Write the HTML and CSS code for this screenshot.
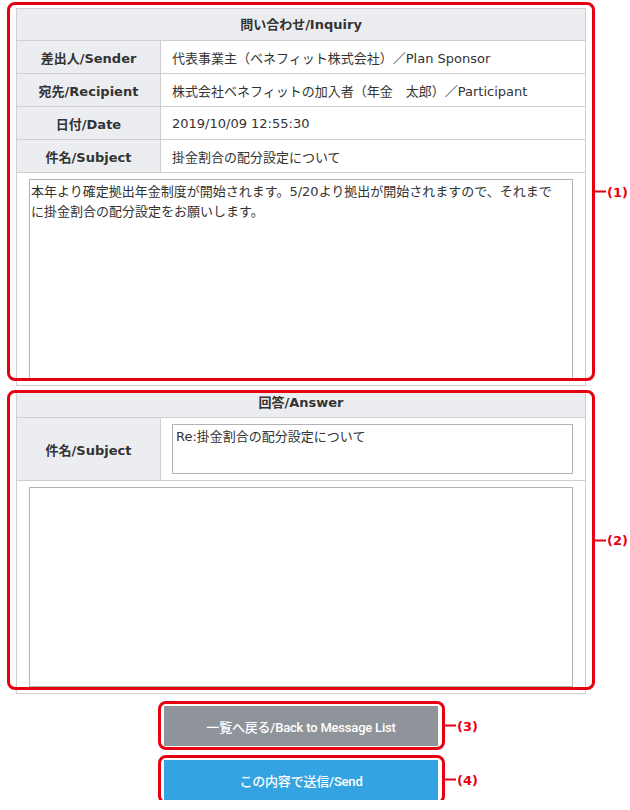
FILE: index.html
```html
<!DOCTYPE html>
<html lang="ja">
<head>
<meta charset="utf-8">
<title>問い合わせ/Inquiry</title>
<link rel="stylesheet" href="styles.css">
</head>
<body>
<div class="page">
  <section class="panel panel-inquiry">
    <div class="panel-head">問い合わせ/Inquiry</div>
    <div class="row">
      <div class="label">差出人/Sender</div>
      <div class="value">代表事業主（ベネフィット株式会社）／Plan Sponsor</div>
    </div>
    <div class="row">
      <div class="label">宛先/Recipient</div>
      <div class="value">株式会社ベネフィットの加入者（年金　太郎）／Participant</div>
    </div>
    <div class="row">
      <div class="label">日付/Date</div>
      <div class="value">2019/10/09 12:55:30</div>
    </div>
    <div class="row">
      <div class="label">件名/Subject</div>
      <div class="value">掛金割合の配分設定について</div>
    </div>
    <div class="body-cell">
      <textarea class="msg" readonly>本年より確定拠出年金制度が開始されます。5/20より拠出が開始されますので、それまでに掛金割合の配分設定をお願いします。</textarea>
    </div>
    <div class="anno anno-1"><span class="tag"><i class="wire"></i>(1)</span></div>
  </section>

  <section class="panel panel-answer">
    <div class="panel-head panel-head-sm">回答/Answer</div>
    <div class="row row-tall">
      <div class="label">件名/Subject</div>
      <div class="value value-input">
        <textarea class="subject">Re:掛金割合の配分設定について</textarea>
      </div>
    </div>
    <div class="body-cell">
      <textarea class="msg"></textarea>
    </div>
    <div class="anno anno-2"><span class="tag"><i class="wire"></i>(2)</span></div>
  </section>

  <div class="actions">
    <button class="btn btn-back" type="button">一覧へ戻る/Back to Message List<span class="anno anno-btn anno-3"><span class="tag"><i class="wire"></i>(3)</span></span></button>
    <button class="btn btn-send" type="button">この内容で送信/Send<span class="anno anno-btn anno-4"><span class="tag"><i class="wire"></i>(4)</span></span></button>
  </div>
</div>
</body>
</html>
```

FILE: styles.css
```css
* {
  box-sizing: border-box;
}

body {
  margin: 0;
  background: #ffffff;
  color: #333333;
  font-family: "DejaVu Sans", "Noto Sans CJK JP", sans-serif;
  font-size: 13px;
}

.page {
  width: 570px;
  margin-left: 16px;
  padding-top: 8px;
}

.panel {
  position: relative;
  border: 1px solid #cfcfcf;
}

.panel + .panel {
  margin-top: 6px;
}

.panel-head {
  height: 32px;
  line-height: 31px;
  background: #ecedf0;
  border-bottom: 1px solid #cfcfcf;
  font-weight: bold;
  text-align: center;
}

.panel-head-sm {
  height: 25px;
  line-height: 19px;
  padding-bottom: 5px;
}

.row {
  display: flex;
  height: 33px;
  border-bottom: 1px solid #cfcfcf;
}

.row-tall {
  height: 63px;
}

.label {
  flex: 0 0 144px;
  display: flex;
  align-items: center;
  justify-content: center;
  background: #ecedf0;
  border-right: 1px solid #cfcfcf;
  font-weight: bold;
  white-space: nowrap;
}

.value {
  flex: 1;
  display: flex;
  align-items: center;
  padding-left: 11px;
  white-space: nowrap;
}

.value-input {
  padding: 6px 12px 6px 11px;
}

.body-cell {
  padding: 6px 12px;
}

textarea {
  display: block;
  width: 100%;
  margin: 0;
  border: 1px solid #b3b3b3;
  border-radius: 0;
  background: #ffffff;
  color: #333333;
  font-family: "DejaVu Sans", "Noto Sans CJK JP", sans-serif;
  font-size: 13px;
  line-height: 20px;
  resize: none;
  outline: none;
  overflow: hidden;
}

.msg {
  height: 200px;
  padding: 2px 8px 2px 1px;
}

.subject {
  height: 50px;
  padding: 2px 3px;
}

.actions {
  display: flex;
  flex-direction: column;
  align-items: center;
  gap: 14px;
  margin-top: 12px;
}

.btn {
  position: relative;
  width: 274px;
  height: 40px;
  padding: 0;
  border: 0;
  border-radius: 0;
  color: #ffffff;
  font-family: Roboto, "Noto Sans CJK JP", sans-serif;
  font-size: 13px;
  font-weight: 500;
  letter-spacing: -0.2px;
}

.btn-back {
  background: #8f939a;
}

.btn-send {
  background: #34a3e1;
}

/* annotation overlays */
.anno {
  position: absolute;
  border: 3px solid #e60012;
  border-radius: 8px;
  pointer-events: none;
}

.anno-1 {
  top: -7px;
  left: -10px;
  right: -10px;
  bottom: 4px;
}

.anno-2 {
  top: -3px;
  left: -10px;
  right: -10px;
  bottom: 3px;
}

.anno-btn {
  top: -5px;
  left: -6px;
  right: -7px;
  bottom: -4px;
}

.tag {
  position: absolute;
  left: calc(100% + 3px);
  top: 50%;
  transform: translateY(-50%);
  display: flex;
  align-items: center;
  color: #e60012;
  font-family: "DejaVu Sans", sans-serif;
  font-size: 13px;
  font-weight: bold;
  letter-spacing: 0;
  white-space: nowrap;
}

.wire {
  display: block;
  width: 11px;
  height: 2px;
  margin-right: 1px;
  background: #e60012;
}
```
